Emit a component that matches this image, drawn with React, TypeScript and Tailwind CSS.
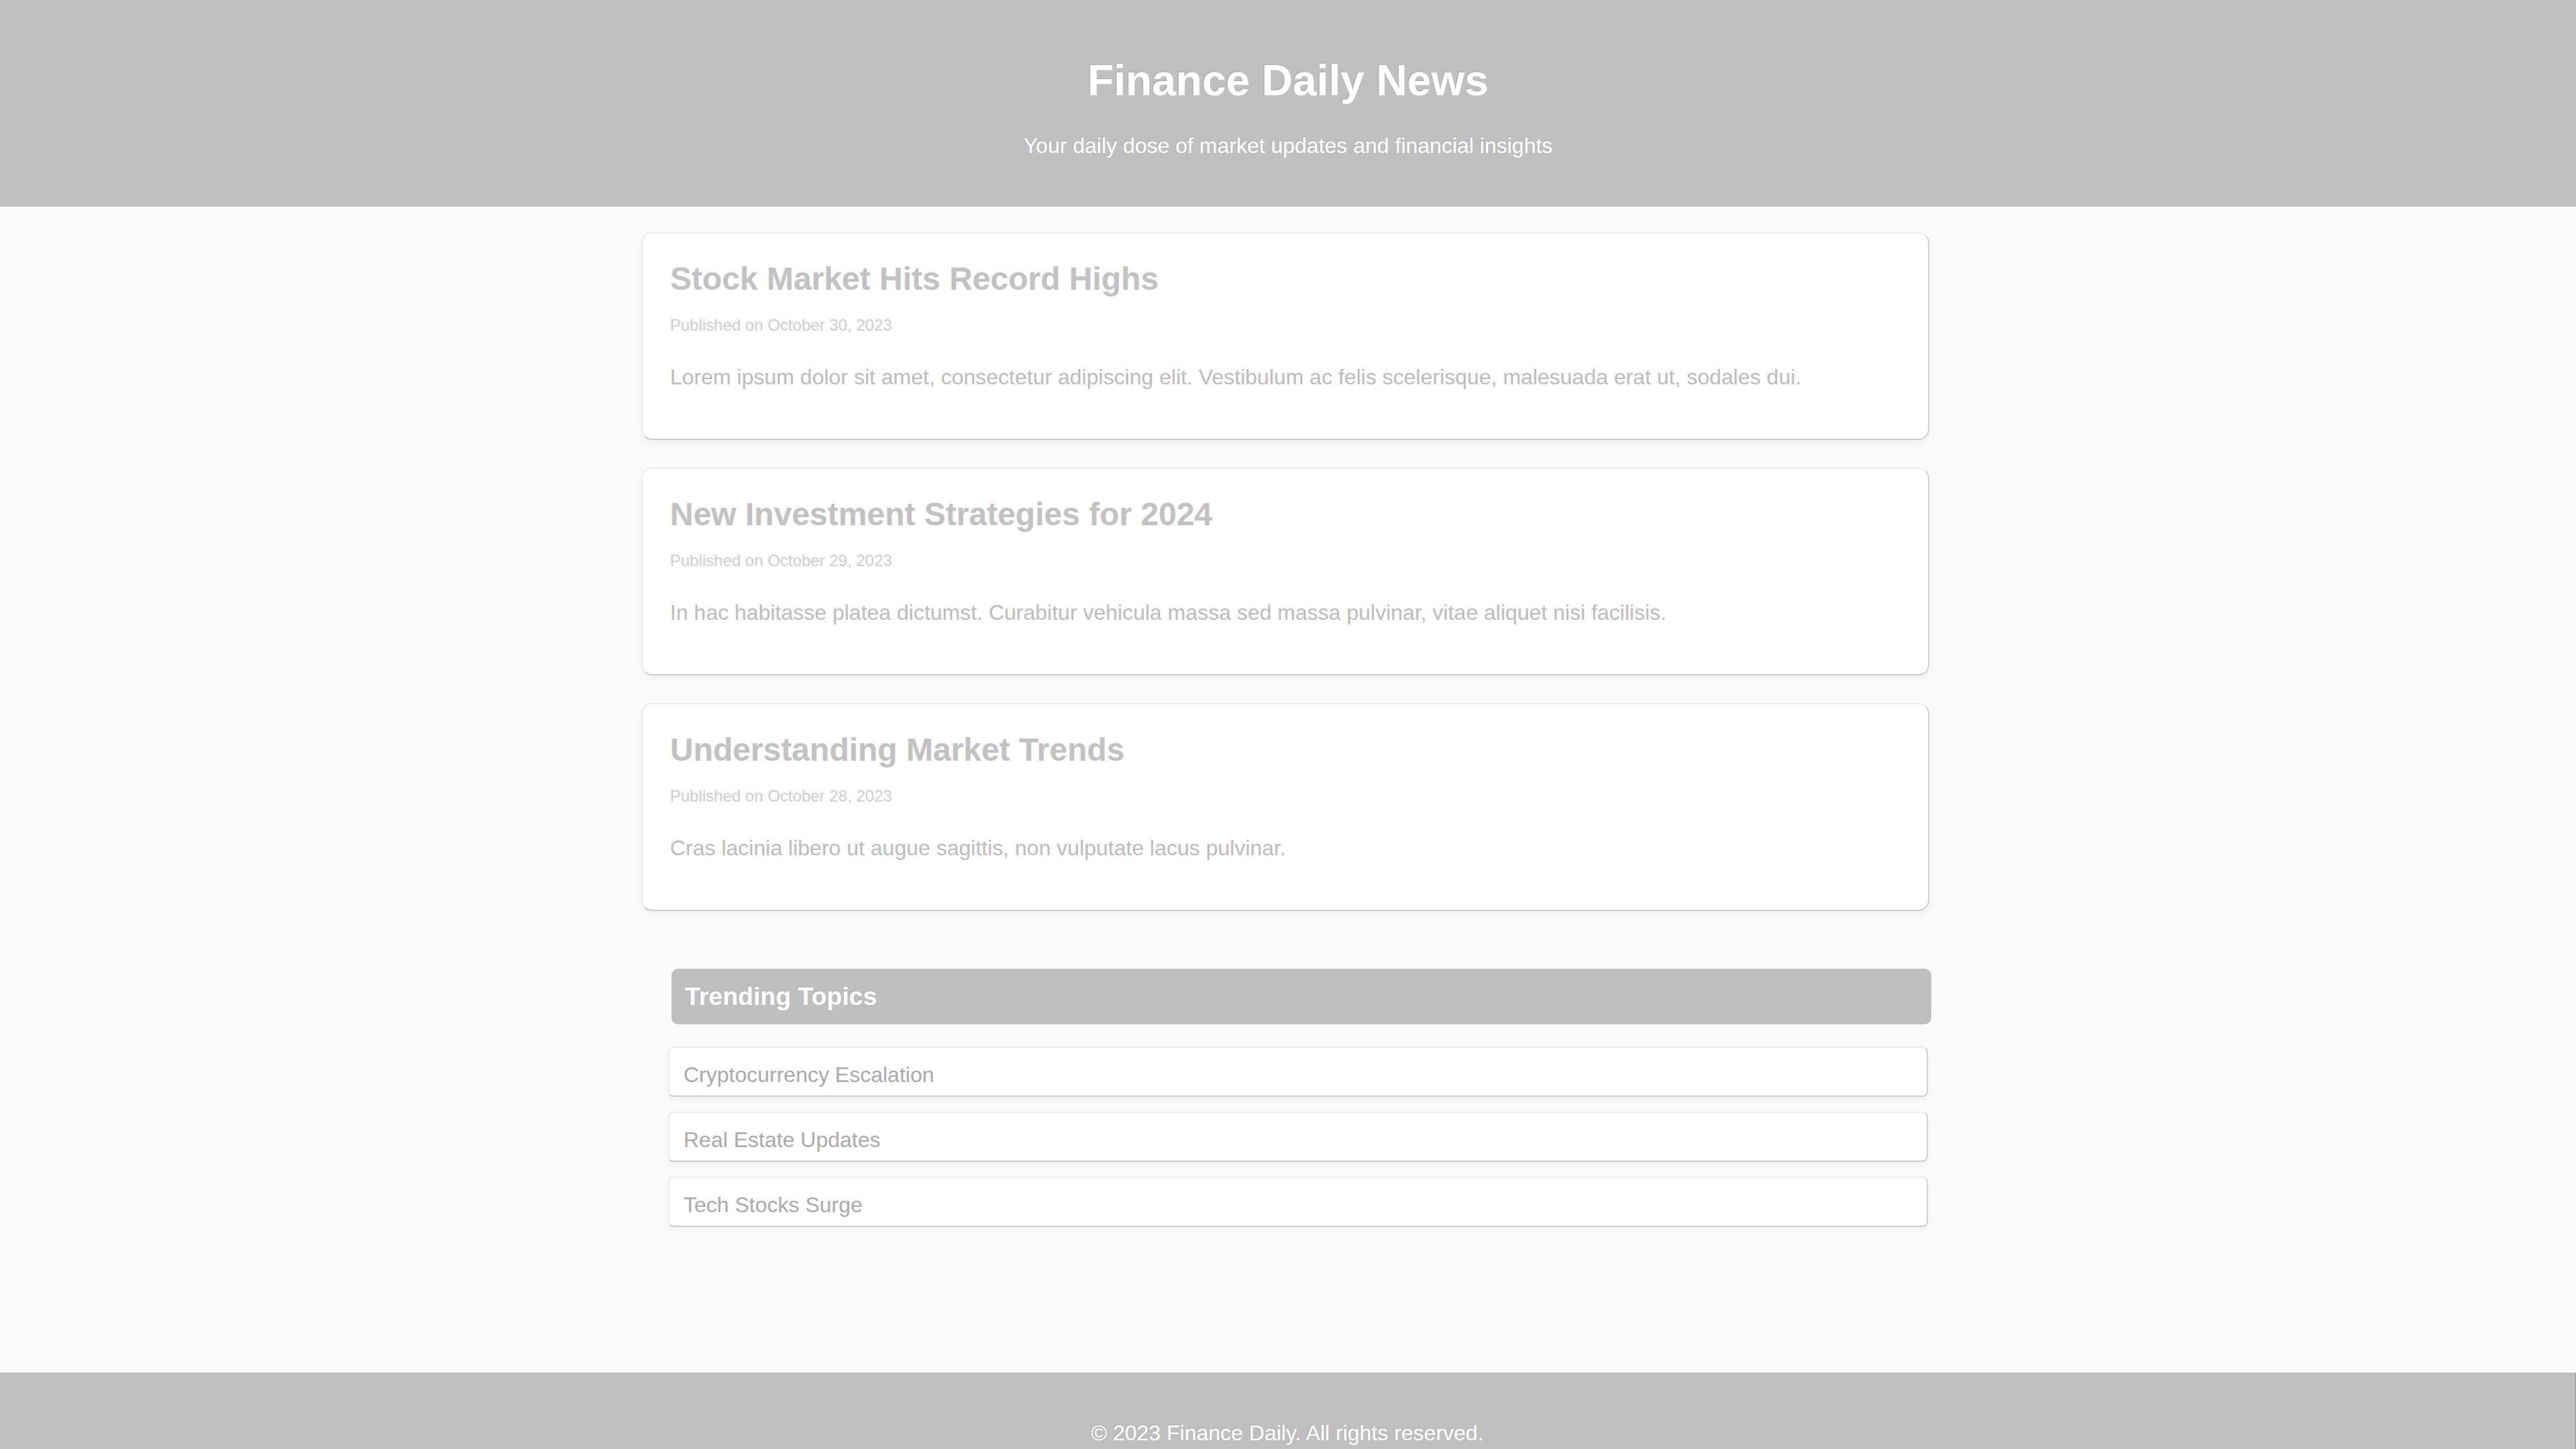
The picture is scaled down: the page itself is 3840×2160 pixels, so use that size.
import React from 'react';

interface Article {
  title: string;
  date: string;
  body: string;
}

const articles: Article[] = [
  {
    title: 'Stock Market Hits Record Highs',
    date: 'Published on October 30, 2023',
    body: 'Lorem ipsum dolor sit amet, consectetur adipiscing elit. Vestibulum ac felis scelerisque, malesuada erat ut, sodales dui.',
  },
  {
    title: 'New Investment Strategies for 2024',
    date: 'Published on October 29, 2023',
    body: 'In hac habitasse platea dictumst. Curabitur vehicula massa sed massa pulvinar, vitae aliquet nisi facilisis.',
  },
  {
    title: 'Understanding Market Trends',
    date: 'Published on October 28, 2023',
    body: 'Cras lacinia libero ut augue sagittis, non vulputate lacus pulvinar.',
  },
];

const topics = ['Cryptocurrency Escalation', 'Real Estate Updates', 'Tech Stocks Surge'];

const App: React.FC = () => {
  return (
    <div className="min-h-screen bg-[#fafafa] font-['Liberation_Sans',Arial,sans-serif]">
      <header className="bg-[#c0c0c0] pt-[40px] pb-[72px] text-center text-white">
        <h1 className="mt-[43px] text-[64px] font-bold leading-[74px] [text-shadow:-2px_-2px_0_rgba(0,0,0,0.05)]">
          Finance Daily News
        </h1>
        <p className="mt-[42px] text-[32px] leading-[37px] [text-shadow:-2px_-2px_0_rgba(0,0,0,0.05)]">
          Your daily dose of market updates and financial insights
        </p>
      </header>

      <main className="mx-auto w-[1928px] pr-[8px] pt-[38px] pb-[217px]">
        <div className="flex flex-col gap-[41px]">
          {articles.map((a, i) => (
            <article
              key={i}
              className="h-[310px] rounded-[16px] border-2 border-[#ededed] border-r-[#d2d2d2] border-b-[#cccccc] bg-white pl-[41px] pr-[40px] pt-[40px] shadow-[0_5px_10px_rgba(0,0,0,0.04)]"
            >
              <h2 className="text-[48px] font-bold leading-[55px] text-[#c2c2c2] [text-shadow:-2px_-2px_0_rgba(0,0,0,0.05)]">
                {a.title}
              </h2>
              <p className="mt-[28px] text-[24px] leading-[28px] text-[#d0d0d0] [text-shadow:-2px_-2px_0_rgba(0,0,0,0.06)]">
                {a.date}
              </p>
              <p className="mt-[45px] text-[32px] leading-[37px] text-[#bdbdbd] [text-shadow:-2px_-2px_0_rgba(0,0,0,0.05)]">
                {a.body}
              </p>
            </article>
          ))}
        </div>

        <aside className="mt-[86px]">
          <h3 className="ml-[45px] w-[1878px] rounded-[10px] bg-[#bfbfbf] px-[20px] py-[20px] text-[37.44px] font-bold leading-[43px] text-white [text-shadow:-2px_-2px_0_rgba(0,0,0,0.05)]">
            Trending Topics
          </h3>
          <ul className="mt-[33px] ml-[40px] flex w-[1878px] flex-col gap-[22px]">
            {topics.map((t) => (
              <li
                key={t}
                className="h-[75px] rounded-[8px] border-2 border-[#ececec] border-r-[#d2d2d2] border-b-[#cccccc] bg-white px-[21px] pt-[22px] text-[32px] leading-[37px] text-[#ababab] shadow-[0_5px_8px_rgba(0,0,0,0.04)] [text-shadow:-2px_-2px_0_rgba(0,0,0,0.05)]"
              >
                {t}
              </li>
            ))}
          </ul>
        </aside>
      </main>

      <footer className="border-r-2 border-[#a9a9a9] bg-[#c0c0c0] pt-[72px] pb-[72px] text-center text-[32px] leading-[37px] text-white [text-shadow:-2px_-2px_0_rgba(0,0,0,0.05)]">
        <p>© 2023 Finance Daily. All rights reserved.</p>
      </footer>
    </div>
  );
};

export default App;
